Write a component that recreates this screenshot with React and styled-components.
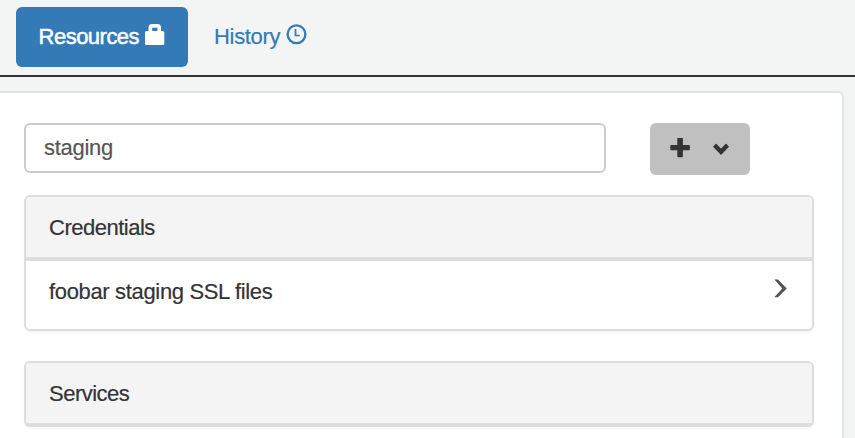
import React from "react";
import styled, { createGlobalStyle } from "styled-components";

const GlobalStyle = createGlobalStyle`
  * { box-sizing: border-box; }
  html, body { margin: 0; background: #f3f5f5; }
  body {
    height: 438px;
    overflow: hidden;
    color: #333;
    font: 22px/30px "Liberation Sans", Arial, sans-serif;
    letter-spacing: -0.34px;
    -webkit-text-stroke: 0.2px;
  }
  svg { display: block; flex: none; }
`;

const Page = styled.div`
  height: 438px;
  overflow: hidden;
`;

const Tabs = styled.nav`
  display: flex;
  gap: 4px;
  height: 77px;
  padding: 7px 16px 0;
  border-bottom: 2px solid #333;
`;

const Tab = styled.a`
  display: flex;
  gap: 6px;
  height: 60px;
  width: ${(p) => (p.$active ? 172 : 140)}px;
  padding: 14px 0 0 ${(p) => (p.$active ? 22.6 : 22)}px;
  border-radius: 6px;
  color: ${(p) => (p.$active ? "#fff" : "#337ab7")};
  background: ${(p) => (p.$active ? "#337ab7" : "transparent")};
  -webkit-text-stroke: ${(p) => (p.$active ? "0.5px" : "0.2px")};
  letter-spacing: ${(p) => (p.$active ? -0.52 : -0.32)}px;
`;

const TabLabel = styled.span`
  padding-top: 1px;
`;

const Panel = styled.main`
  width: 854px;
  height: 380px;
  margin: 14px 0 0 -10px;
  padding: 30px 28px 0 32px;
  border: 2px solid #e1e2e2;
  border-radius: 6px;
  background: #fff;
`;

const Toolbar = styled.div`
  display: flex;
  align-items: flex-start;
  gap: 44px;
  height: 72px;
`;

const SearchInput = styled.input`
  width: 582px;
  height: 50px;
  padding: 0 18px;
  border: 2px solid #ccc;
  border-radius: 6px;
  outline: none;
  background: #fff;
  color: #555;
  font: inherit;
  letter-spacing: -0.3px;
`;

const AddButton = styled.button`
  display: flex;
  gap: 22px;
  width: 100px;
  height: 52px;
  padding: 15px 0 0 20px;
  border: 0;
  border-radius: 6px;
  background: #c0c0c0;
  color: #333;
`;

const Card = styled.section`
  width: 790px;
  margin-bottom: 30px;
  border: 2px solid #ddd;
  border-radius: 6px;
  background: #fff;
  box-shadow: 0 2px 2px rgba(0, 0, 0, 0.04);
`;

const CardHeader = styled.header`
  height: ${(p) => (p.$empty ? 62 : 64)}px;
  padding: 16px 23px 0;
  border-bottom: ${(p) => (p.$empty ? 2 : 4)}px solid #ddd;
  border-radius: 4px 4px 0 0;
  background: #f4f4f4;
  letter-spacing: -0.5px;
`;

const ResourceRow = styled.div`
  display: flex;
  justify-content: space-between;
  height: 68px;
  padding: 16px 25px 0 23px;
`;

const RowIcon = styled.span`
  padding-top: 2px;
`;

const LockIcon = () => (
  <svg width="20" height="24" viewBox="0 0 20 24" fill="currentColor" stroke="none">
    <path
      fillRule="evenodd"
      d="M3.5 10V6.5Q3.5 3 7 3h5.5Q16 3 16 6.5V10h1.7q1.6 0 1.6 1.6v10.8q0 1.6-1.6 1.6H1.6Q0 24 0 22.400V11.600Q0 10 1.600 10ZM7.200 10h5.200V6.700H7.200Z"
    />
  </svg>
);

const ClockIcon = () => (
  <svg width="21" height="26" viewBox="0 0 21 26" fill="none" stroke="currentColor">
    <circle cx="10.500" cy="13.300" r="8.900" strokeWidth="2.300" />
    <path d="M9.500 8v6.500H13.800" strokeWidth="1.700" />
  </svg>
);

const PlusIcon = () => (
  <svg width="21" height="20" viewBox="0 0 21 20" fill="currentColor">
    <rect x="0.300" y="6.900" width="19.600" height="5.400" rx="1" />
    <rect x="7.300" y="-0.300" width="5.600" height="19.500" rx="1" />
  </svg>
);

const ChevronDownIcon = () => (
  <svg width="17" height="20" viewBox="0 0 17 20" fill="currentColor">
    <path d="M0 8.700 2.500 6.100q.5-.5 1 0L8 10.500l4.500-4.400q.5-.5 1 0L16 8.700 8 17Z" />
  </svg>
);

const ChevronRightIcon = () => (
  <svg width="13" height="20" viewBox="0 0 13 20" fill="#555">
    <path d="M.300 .500H4L12.800 9.500 4 18.300H.300L8.300 9.500Z" />
  </svg>
);

export default function App() {
  return (
    <>
      <GlobalStyle />
      <Page>
        <Tabs>
          <Tab $active>
            <TabLabel>Resources</TabLabel>
            <LockIcon />
          </Tab>
          <Tab>
            <TabLabel>History</TabLabel>
            <ClockIcon />
          </Tab>
        </Tabs>
        <Panel>
          <Toolbar>
            <SearchInput type="text" defaultValue="staging" aria-label="Filter resources" />
            <AddButton aria-label="Add">
              <PlusIcon />
              <ChevronDownIcon />
            </AddButton>
          </Toolbar>
          <Card>
            <CardHeader>Credentials</CardHeader>
            <ResourceRow>
              foobar staging SSL files
              <RowIcon>
                <ChevronRightIcon />
              </RowIcon>
            </ResourceRow>
          </Card>
          <Card>
            <CardHeader $empty>Services</CardHeader>
          </Card>
        </Panel>
      </Page>
    </>
  );
}
